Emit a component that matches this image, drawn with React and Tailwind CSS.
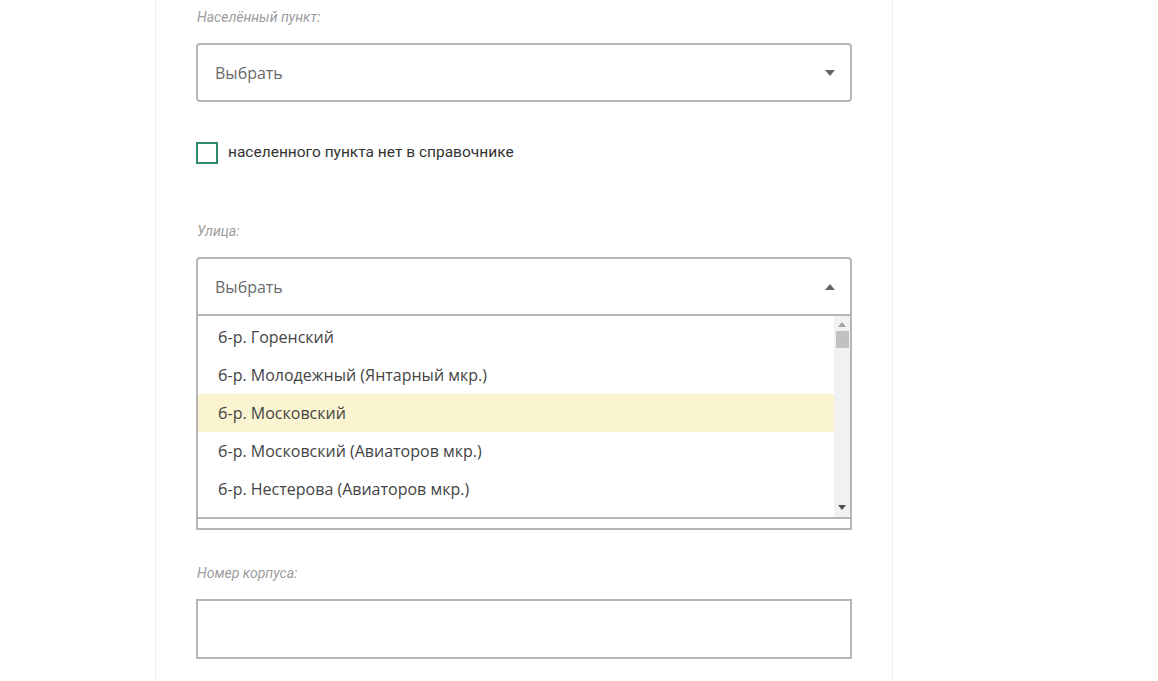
import React from "react";

const labelCls =
  "block h-[17px] leading-[17px] text-[14px] italic text-[#9c9c9c] pl-[1px] font-['Roboto',sans-serif]";

function Caret({ up }) {
  return (
    <svg width="10" height="6" viewBox="0 0 10 6" className="block">
      {up ? (
        <path d="M0 6 L5 0 L10 6 Z" fill="#666" />
      ) : (
        <path d="M0 0 L10 0 L5 6 Z" fill="#666" />
      )}
    </svg>
  );
}

function Checkbox({ text }) {
  return (
    <div className="flex items-center h-[22px]">
      <div className="w-[22px] h-[22px] border-2 border-[#2f8a6c] bg-white shrink-0" />
      {text ? (
        <span className="ml-[10px] text-[15.5px] text-[#333] font-['Roboto',sans-serif]">
          {text}
        </span>
      ) : null}
    </div>
  );
}

const items = [
  "б-р. Горенский",
  "б-р. Молодежный (Янтарный мкр.)",
  "б-р. Московский",
  "б-р. Московский (Авиаторов мкр.)",
  "б-р. Нестерова (Авиаторов мкр.)",
  "б-р. Победы",
];

export default function App() {
  return (
    <div className="min-h-screen bg-white flex overflow-hidden h-[681px]">
      <div className="ml-[155px] w-[738px] shrink-0 border-x border-[#f0f0f0] pl-[40px] pr-[40px] pt-[9px] font-['Open_Sans',sans-serif]">
        {/* Населённый пункт */}
        <label className={labelCls}>Населённый пункт:</label>
        <div className="mt-[17px] h-[59px] border-2 border-[#b5b5b5] rounded-[4px] flex items-center pl-[17px] pr-[15px] justify-between">
          <span className="text-[16px] text-[#6a6a6a]">Выбрать</span>
          <Caret />
        </div>
        <div className="mt-[40px]">
          <Checkbox text="населенного пункта нет в справочнике" />
        </div>

        {/* Улица */}
        <label className={labelCls + " mt-[59px]"}>Улица:</label>
        <div className="relative mt-[17px] z-10">
          <div className="h-[59px] border-2 border-[#b5b5b5] rounded-t-[4px] flex items-center pl-[17px] pr-[15px] justify-between bg-white">
            <span className="text-[16px] text-[#6a6a6a]">Выбрать</span>
            <Caret up />
          </div>
          <div className="absolute left-0 right-0 top-full h-[203px] border-x-2 border-b-2 border-[#b5b5b5] bg-white flex overflow-hidden">
            <div className="flex-1 pt-[2px] overflow-hidden">
              {items.slice(0, 5).map((t, i) => (
                <div
                  key={t}
                  className={
                    "h-[38px] flex items-center pl-[20px] text-[16px] text-[#444] " +
                    (i === 2 ? "bg-[#faf5d0]" : "")
                  }
                >
                  {t}
                </div>
              ))}
            </div>
            <div className="w-[16px] bg-[#f1f1f1] flex flex-col items-center">
              <svg width="8" height="5" viewBox="0 0 8 5" className="mt-[6px]">
                <path d="M0 5 L4 0 L8 5 Z" fill="#a3a3a3" />
              </svg>
              <div className="mt-[4px] w-[13px] h-[17px] bg-[#c1c1c1]" />
              <div className="flex-1" />
              <svg width="8" height="5" viewBox="0 0 8 5" className="mb-[7px]">
                <path d="M0 0 L8 0 L4 5 Z" fill="#505050" />
              </svg>
            </div>
          </div>
        </div>
        <div className="mt-[40px]">
          <Checkbox />
        </div>

        {/* Номер дома (covered by the open list) */}
        <div className="mt-[59px] h-[17px]" />
        <div className="mt-[17px] h-[59px] border-2 border-[#b5b5b5]" />

        {/* Номер корпуса */}
        <label className={labelCls + " mt-[35px]"}>Номер корпуса:</label>
        <div className="mt-[17px] h-[60px] border-2 border-[#b5b5b5]" />
      </div>
    </div>
  );
}
